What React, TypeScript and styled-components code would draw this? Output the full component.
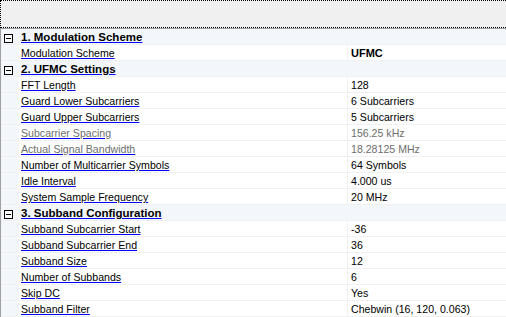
import React from 'react';
import styled, { createGlobalStyle } from 'styled-components';

const GlobalStyle = createGlobalStyle`
  html, body {
    margin: 0;
    padding: 0;
    background: #ffffff;
  }
  body {
    font-family: "Liberation Sans", Arial, sans-serif;
    font-size: 10.6px;
  }
`;

const Grid = styled.div`
  width: 506px;
  height: 317px;
  overflow: hidden;
  display: flex;
  flex-direction: column;
  background: #ffffff;
`;

const Toolbar = styled.div`
  height: 28px;
  box-sizing: border-box;
  flex-shrink: 0;
  background: #f0f0f0;
  border: 1px dotted #000000;
  border-right: none;
  box-shadow: 0 1px 0 #a0a0a0;
  margin-bottom: 1px;
`;

const Rows = styled.div`
  display: flex;
  flex-direction: column;
  border-left: 1px solid #a0a0a0;
`;

const Row = styled.div<{ $category?: boolean }>`
  display: flex;
  height: 16px;
  box-sizing: border-box;
  border-bottom: 1px solid #f0f0f0;
  background: ${(p) => (p.$category ? '#f3f6fb' : '#ffffff')};
`;

const Gutter = styled.div`
  width: 18px;
  flex-shrink: 0;
  background: #f3f6fb;
  display: flex;
  align-items: flex-start;
  justify-content: center;
  padding: 5px 3px 0 0;
  box-sizing: border-box;
`;

const ToggleBox = styled.div`
  width: 9px;
  height: 9px;
  box-sizing: border-box;
  border: 1px solid #000000;
  background: #ffffff;
  display: flex;
  align-items: center;
  justify-content: center;

  &::after {
    content: '';
    width: 5px;
    height: 1px;
    background: #000000;
  }
`;

const Label = styled.div<{ $bold?: boolean; $disabled?: boolean }>`
  width: 328px;
  flex-shrink: 0;
  padding: 2px 0 0 2px;
  box-sizing: border-box;
  line-height: 13px;
  white-space: nowrap;
  overflow: hidden;
  color: ${(p) => (p.$disabled ? '#6d6d6d' : '#000000')};
  font-weight: ${(p) => (p.$bold ? 700 : 400)};
  font-size: ${(p) => (p.$bold ? '11.5px' : '10.6px')};

  span {
    text-decoration: underline;
    text-decoration-color: #0000ff;
    text-underline-offset: 1px;
  }
`;

const Value = styled.div<{ $bold?: boolean; $disabled?: boolean; $category?: boolean }>`
  flex: 1;
  padding: 2px 0 0 3px;
  line-height: 13px;
  white-space: nowrap;
  border-left: ${(p) => (p.$category ? 'none' : '1px solid #f0f0f0')};
  color: ${(p) => (p.$disabled ? '#6d6d6d' : '#000000')};
  font-weight: ${(p) => (p.$bold ? 700 : 400)};
  font-size: ${(p) => (p.$bold ? '11px' : '10.6px')};
`;

type Prop = { name: string; value: string; bold?: boolean; disabled?: boolean };
type Category = { title: string; props: Prop[] };

const data: Category[] = [
  {
    title: '1. Modulation Scheme',
    props: [{ name: 'Modulation Scheme', value: 'UFMC', bold: true }],
  },
  {
    title: '2. UFMC Settings',
    props: [
      { name: 'FFT Length', value: '128' },
      { name: 'Guard Lower Subcarriers', value: '6 Subcarriers' },
      { name: 'Guard Upper Subcarriers', value: '5 Subcarriers' },
      { name: 'Subcarrier Spacing', value: '156.25 kHz', disabled: true },
      { name: 'Actual Signal Bandwidth', value: '18.28125 MHz', disabled: true },
      { name: 'Number of Multicarrier Symbols', value: '64 Symbols' },
      { name: 'Idle Interval', value: '4.000 us' },
      { name: 'System Sample Frequency', value: '20 MHz' },
    ],
  },
  {
    title: '3. Subband Configuration',
    props: [
      { name: 'Subband Subcarrier Start', value: '-36' },
      { name: 'Subband Subcarrier End', value: '36' },
      { name: 'Subband Size', value: '12' },
      { name: 'Number of Subbands', value: '6' },
      { name: 'Skip DC', value: 'Yes' },
      { name: 'Subband Filter', value: 'Chebwin (16, 120, 0.063)' },
    ],
  },
];

const App = () => {
  return (
    <>
      <GlobalStyle />
      <Grid>
        <Toolbar />
        <Rows>
          {data.map((cat) => (
            <React.Fragment key={cat.title}>
              <Row $category>
                <Gutter>
                  <ToggleBox />
                </Gutter>
                <Label $bold>
                  <span>{cat.title}</span>
                </Label>
                <Value $category />
              </Row>
              {cat.props.map((p) => (
                <Row key={p.name}>
                  <Gutter />
                  <Label $disabled={p.disabled}>
                    <span>{p.name}</span>
                  </Label>
                  <Value $bold={p.bold} $disabled={p.disabled}>
                    {p.value}
                  </Value>
                </Row>
              ))}
            </React.Fragment>
          ))}
        </Rows>
      </Grid>
    </>
  );
};

export default App;
